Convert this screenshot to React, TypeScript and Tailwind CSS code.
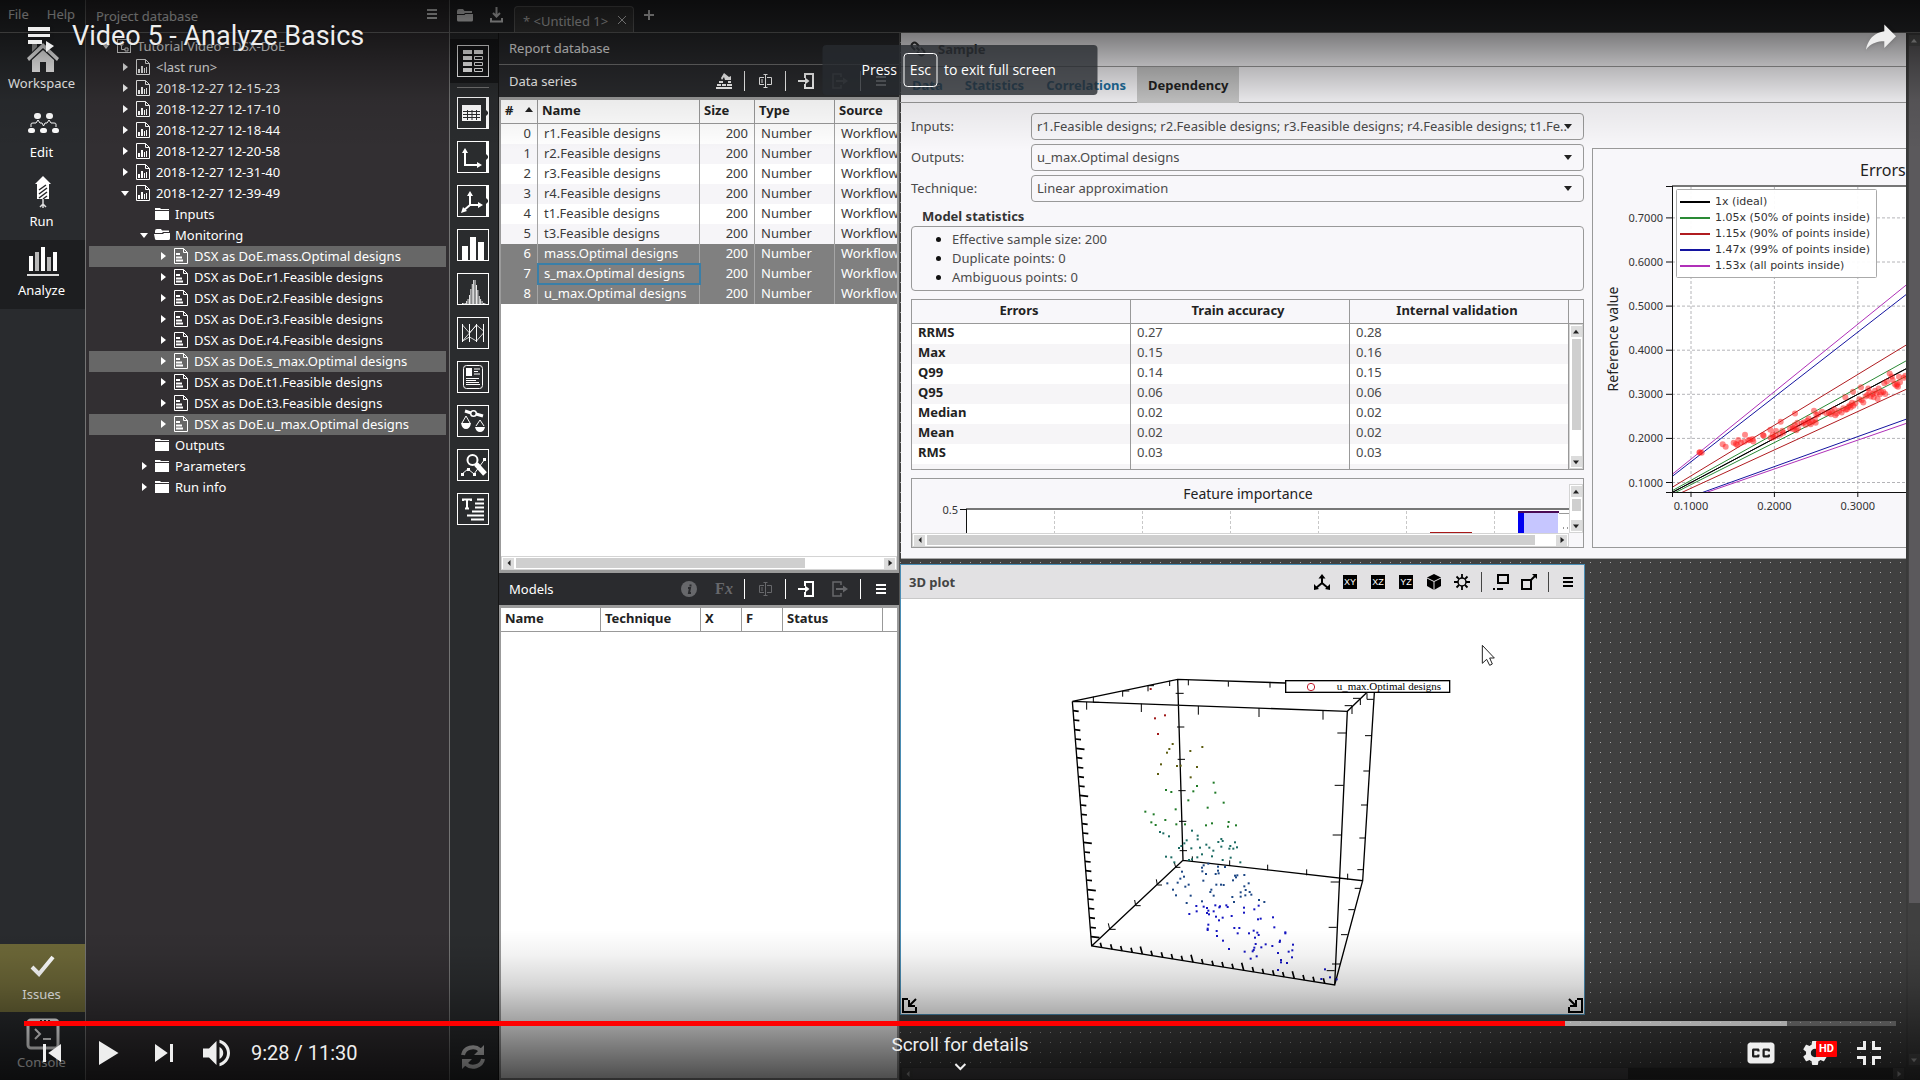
import React from "react";

const FONT = 'font-["Noto_Sans","Open_Sans",sans-serif]';

/* ---------- shared bits ---------- */

type SvgProps = { children?: React.ReactNode; className?: string; size?: number; box?: number };

function Glyph({ children, className = "", size = 16, box = 16 }: SvgProps) {
  return (
    <svg width={size} height={size} viewBox={`0 0 ${box} ${box}`} className={`shrink-0 ${className}`} fill="none" stroke="currentColor" aria-hidden="true">
      {children}
    </svg>
  );
}

function MenuIcon({ className = "" }: { className?: string }) {
  return (
    <Glyph size={16} className={className}>
      <path d="M3 4h10M3 8h10M3 12h10" strokeWidth="2" />
    </Glyph>
  );
}

function Triangle({ dir, className = "" }: { dir: "up" | "down" | "left" | "right"; className?: string }) {
  const d = {
    up: "M0 6l4-5 4 5z",
    down: "M0 2l4 5 4-5z",
    left: "M6 0L2 4l4 4z",
    right: "M2 0l5 4-5 4z",
  }[dir];
  return (
    <svg width="8" height="8" viewBox="0 0 8 8" className={`shrink-0 ${className}`} aria-hidden="true">
      <path d={d} fill="currentColor" />
    </svg>
  );
}

function Arrow({ dir, dark }: { dir: "up" | "down" | "left" | "right"; dark?: boolean }) {
  return (
    <button
      type="button"
      aria-label={`Scroll ${dir}`}
      className={`flex h-[11px] w-[11px] shrink-0 items-center justify-center ${dark ? "bg-[#ffffff14] text-[#b0b0b0]" : "bg-[#dcdcdc] text-[#222]"}`}
    >
      <Triangle dir={dir} className="scale-75" />
    </button>
  );
}

function HScroll({ thumb }: { thumb: string }) {
  return (
    <div className="flex h-[14px] items-center gap-[2px] border border-[#d4d4d4] bg-white px-px">
      <Arrow dir="left" />
      <div className="h-[10px] flex-1">
        <div className="h-full bg-[#cfcfcf]" style={{ width: thumb }} />
      </div>
      <Arrow dir="right" />
    </div>
  );
}

function VScroll({ thumb, className = "" }: { thumb: string; className?: string }) {
  return (
    <div className={`flex w-[14px] flex-col items-center gap-[2px] border border-[#d4d4d4] bg-white py-px ${className}`}>
      <Arrow dir="up" />
      <div className="w-[9px] min-h-0 flex-1">
        <div className="w-full bg-[#cfcfcf]" style={{ height: thumb }} />
      </div>
      <Arrow dir="down" />
    </div>
  );
}

/* ---------- left navigation ---------- */

const HomeIcon = (
  <svg width="34" height="36" viewBox="0 0 34 36" fill="#fff" aria-hidden="true">
    <path d="M6 4h5v6l-5 5z" fill="#b4b4b4" />
    <path d="M17 6L1 21l2 3L17 11l14 13 2-3z" />
    <path d="M17 13L6 23v12h8V25h6v10h8V23z" />
  </svg>
);
const EditIcon = (
  <svg width="34" height="24" viewBox="0 0 34 24" fill="#fff" aria-hidden="true">
    <rect x="8" y="1" width="7" height="6" rx="3" />
    <rect x="20" y="1" width="7" height="6" rx="3" />
    <rect x="2" y="16" width="7" height="5" rx="2.5" />
    <rect x="14" y="16" width="7" height="5" rx="2.5" />
    <rect x="26" y="16" width="7" height="5" rx="2.5" />
    <path d="M5 15v-3q0-1 2-1h3l2-3 2 3h2l1.500 3 1.500-3h2l2-3 2 3h3q2 0 2 1v3" fill="none" stroke="#fff" />
  </svg>
);
const RunIcon = (
  <svg width="18" height="34" viewBox="0 0 18 34" fill="#fff" aria-hidden="true">
    <path d="M9 0l8 8h-2v15H3V8H1z" />
    <path d="M5 14l7-5M5 18l8-6M5 22l8-6M9 23l4-3" stroke="#26272a" strokeWidth="1.500" fill="none" />
    <path d="M9 23v9M6 31l3-3 3 3" stroke="#ddd" strokeWidth="1.500" fill="none" />
  </svg>
);
const AnalyzeIcon = (
  <svg width="34" height="32" viewBox="0 0 34 32" aria-hidden="true">
    <path d="M3 10h4v15H3zM15 1h4v24h-4zM27 6h4v19h-4z" fill="#fff" />
    <path d="M9 6h4v19H9zM21 11h4v14h-4z" fill="#b9b9b9" />
    <path d="M1 28h32v2H1z" fill="#ddd" />
  </svg>
);
const IssuesIcon = (
  <svg width="26" height="24" viewBox="0 0 26 24" aria-hidden="true">
    <path d="M2 13l7 7L23 3" fill="none" stroke="#fff" strokeWidth="4" />
  </svg>
);
const ConsoleIcon = (
  <svg width="34" height="34" viewBox="0 0 34 34" fill="none" stroke="#fff" aria-hidden="true">
    <rect x="2" y="3" width="30" height="28" rx="3" strokeWidth="3" />
    <path d="M3 3h28v5H3z" fill="#fff" />
    <path d="M14 4h2M18 4h2M22 4h2" stroke="#222" strokeWidth="2" />
    <path d="M9 12l5 5-5 5M17 22h8" strokeWidth="2" />
  </svg>
);

function NavItem({ icon, label, tone = "h-[69px]" }: { icon: React.ReactNode; label: string; tone?: string }) {
  return (
    <button type="button" className={`flex w-full shrink-0 flex-col items-center text-white ${tone}`}>
      <span className="flex h-10 items-center pt-1">{icon}</span>
      <span className="pr-[2px] leading-5">{label}</span>
    </button>
  );
}

function NavColumn() {
  return (
    <nav className="flex w-[86px] shrink-0 flex-col border-r border-[#747474] bg-[#292b2e]">
      <div className="flex h-[33px] shrink-0 items-center gap-[18px] border-b border-[#747474] pl-2 pb-1 text-white">
        <button type="button">File</button>
        <button type="button">Help</button>
      </div>
      <NavItem icon={HomeIcon} label="Workspace" />
      <NavItem icon={EditIcon} label="Edit" />
      <NavItem icon={RunIcon} label="Run" />
      <NavItem icon={AnalyzeIcon} label="Analyze" tone="h-[69px] bg-[#1d1e20]" />
      <div className="flex-1" />
      <NavItem icon={IssuesIcon} label="Issues" tone="h-[68px] bg-[#6d6838]" />
      <NavItem icon={ConsoleIcon} label="Console" tone="h-[68px]" />
    </nav>
  );
}

/* ---------- project tree ---------- */

type Node = { label: string; depth: number; icon: "root" | "run" | "folder" | "open" | "doc"; arrow?: "right" | "down"; on?: boolean };

const TREE: Node[] = [
  { label: "Tutorial Video - DSX-DoE", depth: 0, icon: "root", arrow: "down" },
  { label: "<last run>", depth: 1, icon: "run", arrow: "right" },
  { label: "2018-12-27 12-15-23", depth: 1, icon: "run", arrow: "right" },
  { label: "2018-12-27 12-17-10", depth: 1, icon: "run", arrow: "right" },
  { label: "2018-12-27 12-18-44", depth: 1, icon: "run", arrow: "right" },
  { label: "2018-12-27 12-20-58", depth: 1, icon: "run", arrow: "right" },
  { label: "2018-12-27 12-31-40", depth: 1, icon: "run", arrow: "right" },
  { label: "2018-12-27 12-39-49", depth: 1, icon: "run", arrow: "down" },
  { label: "Inputs", depth: 2, icon: "folder" },
  { label: "Monitoring", depth: 2, icon: "open", arrow: "down" },
  { label: "DSX as DoE.mass.Optimal designs", depth: 3, icon: "doc", arrow: "right", on: true },
  { label: "DSX as DoE.r1.Feasible designs", depth: 3, icon: "doc", arrow: "right" },
  { label: "DSX as DoE.r2.Feasible designs", depth: 3, icon: "doc", arrow: "right" },
  { label: "DSX as DoE.r3.Feasible designs", depth: 3, icon: "doc", arrow: "right" },
  { label: "DSX as DoE.r4.Feasible designs", depth: 3, icon: "doc", arrow: "right" },
  { label: "DSX as DoE.s_max.Optimal designs", depth: 3, icon: "doc", arrow: "right", on: true },
  { label: "DSX as DoE.t1.Feasible designs", depth: 3, icon: "doc", arrow: "right" },
  { label: "DSX as DoE.t3.Feasible designs", depth: 3, icon: "doc", arrow: "right" },
  { label: "DSX as DoE.u_max.Optimal designs", depth: 3, icon: "doc", arrow: "right", on: true },
  { label: "Outputs", depth: 2, icon: "folder" },
  { label: "Parameters", depth: 2, icon: "folder", arrow: "right" },
  { label: "Run info", depth: 2, icon: "folder", arrow: "right" },
];

const INDENT = ["pl-2", "pl-[27px]", "pl-[46px]", "pl-[65px]"];

function TreeIcon({ kind }: { kind: Node["icon"] }) {
  switch (kind) {
    case "root":
      return (
        <Glyph>
          <rect x="1.500" y="1.500" width="13" height="13" />
          <path d="M4 4h3v3H4zM5.500 7v4.500H9M9 10h3v3H9z" />
        </Glyph>
      );
    case "run":
      return (
        <Glyph>
          <path d="M1.500 .5h9l4 4v11h-13z" />
          <path d="M10.500 .5v4h4" />
          <path d="M3 10h2v4H3zM6 7h2v7H6zM9 9h1v5H9zM11 8h1v6h-1z" fill="currentColor" stroke="none" />
        </Glyph>
      );
    case "doc":
      return (
        <Glyph>
          <path d="M1.500 .5h9l4 4v11h-13z" />
          <path d="M10.500 .5v4h4" />
          <path d="M3 6h4M3 9.500h6M3 12.500h7" strokeWidth="1.800" />
        </Glyph>
      );
    case "open":
      return (
        <Glyph>
          <path d="M1 6V4q0-2 2-2h4l1 1.500h7V5H9L8 6z M0 7h9l1-1h6v5.500q0 1.500-1.500 1.500h-12Q1 13 1 12z" fill="currentColor" stroke="none" />
        </Glyph>
      );
    default:
      return (
        <Glyph>
          <path d="M1 2h5l1 1h8v1H1zM1 5h14v9H1z" fill="currentColor" stroke="none" />
        </Glyph>
      );
  }
}

function ProjectPanel() {
  return (
    <section className="flex w-[364px] shrink-0 flex-col border-r border-[#747474] bg-[#322f32] text-white">
      <header className="flex h-[33px] shrink-0 items-center justify-between border-b border-[#747474] pr-[9px] pl-[10px]">
        <h2>Project database</h2>
        <button type="button" aria-label="Project menu" className="pb-1">
          <MenuIcon />
        </button>
      </header>
      <ul className="m-[3px]">
        {TREE.map((n) => (
          <li key={n.label} className={`flex h-[21px] items-center pb-px ${INDENT[n.depth]} ${n.on ? "bg-[#676767]" : ""}`}>
            <span className="flex w-[18px] justify-center">{n.arrow && <Triangle dir={n.arrow} />}</span>
            <span className="mr-1 flex w-[18px] justify-center">
              <TreeIcon kind={n.icon} />
            </span>
            <span className="pb-px leading-[18px] whitespace-nowrap">{n.label}</span>
          </li>
        ))}
      </ul>
    </section>
  );
}

/* ---------- plot tool strip ---------- */

const Band = (
  <g stroke="none">
    <path d="M29 0h3v32h-3z" fill="#fff" />
    <path d="M29 13l3 3-3 3z" fill="#2a2c2e" />
  </g>
);

const HIST = [1, 1, 1, 3, 5, 9, 15, 20, 24, 24, 19, 14, 8, 5, 3, 1, 1];

const TOOLS: { name: string; art: React.ReactNode }[] = [
  {
    name: "Table",
    art: (
      <>
        <path d="M5 8h19v16H5z" fill="#fff" stroke="none" />
        <path d="M6 14.500h17M6 17.500h17M6 20.500h17M10.500 13v10M15 13v10M19.500 13v10" stroke="#2a2c2e" />
        {Band}
      </>
    ),
  },
  {
    name: "2D plot",
    art: (
      <>
        <path d="M8 9v15h14" strokeWidth="2" />
        <path d="M5 12l3-5 3 5zM20 21l5 3-5 3z" fill="#fff" stroke="none" />
        {Band}
      </>
    ),
  },
  {
    name: "3D plot",
    art: (
      <>
        <path d="M13 8v12h10M13 20l-7 6" strokeWidth="2" />
        <path d="M10 11l3-5 3 5zM21 17l5 3-5 3zM4 28l2-6 4 4z" fill="#fff" stroke="none" />
        {Band}
      </>
    ),
  },
  { name: "Bar chart", art: <path d="M5 17h6v14H5zM13 8h6v23h-6zM21 13h6v18h-6z" fill="#fff" stroke="none" /> },
  {
    name: "Histogram",
    art: (
      <g fill="#fff" stroke="none">
        {HIST.map((h, i) => (
          <rect key={i} x={5 + i * 1.4} y={31 - h} width="0.9" height={h} />
        ))}
      </g>
    ),
  },
  {
    name: "Parallel coordinates",
    art: (
      <>
        <path d="M5.500 7v18M12.500 7v18M19.500 7v18M26.500 7v18" />
        <path d="M5.500 8l7 8 7-8 7 6M5.500 24l7-8M5.500 24l7-4 7 4 7-8M12.500 16l7-8" strokeWidth="0.800" />
      </>
    ),
  },
  {
    name: "Report",
    art: (
      <>
        <rect x="6.500" y="4.500" width="19" height="23" rx="3" />
        <path d="M9 7h6v8H9z" fill="#fff" stroke="none" />
        <path d="M17 8h6M17 10.500h4M17 13h6M9 17.500h13M9 19.500h10M9 21.500h13M9 23.500h14" />
      </>
    ),
  },
  {
    name: "Compare",
    art: (
      <>
        <path d="M8 6l6 2M19 9l7 2" strokeWidth="3" />
        <circle cx="16.500" cy="8.500" r="2.800" strokeWidth="1.500" />
        <path d="M9 11l-4 7M9 11l4 7M23 15l-4 6M23 15l4 6" />
        <path d="M4 18h10q-1 6-5 6t-5-6zM18 22h10q-1 5-5 5t-5-5z" fill="#fff" stroke="none" />
      </>
    ),
  },
  {
    name: "Explore",
    art: (
      <>
        <circle cx="15.500" cy="11" r="5" strokeWidth="2" />
        <path d="M19 15l9 10" strokeWidth="5" />
        <path d="M5 25l6-5 6 5 11-15" />
        <path d="M4 24h3v3H4zM10 19h3v3h-3zM16 24h3v3h-3zM26 9h3v3h-3z" fill="#fff" stroke="none" />
      </>
    ),
  },
  {
    name: "Text note",
    art: (
      <>
        <path d="M6 8V6.500h8V8M10 6v9.500M8 15.500h4" strokeWidth="2" />
        <path d="M20 6.500h7M18 10.500h9M18 14.500h9M15 18.500h12M10 22.500h17M14 26.500h13" strokeWidth="2" />
      </>
    ),
  },
];

function ToolBox({ name, children }: { name: string; children: React.ReactNode }) {
  return (
    <button type="button" aria-label={name} title={name} className="h-8 w-8 shrink-0">
      <Glyph size={32} box={32} className="text-white">
        {children}
        <rect x="0.500" y="0.500" width="31" height="31" />
      </Glyph>
    </button>
  );
}

function ToolStrip() {
  return (
    <div className="flex w-[49px] shrink-0 flex-col items-stretch border-r border-[#151515] bg-[#2a2c2e] pt-[6px]">
      <div className="flex h-11 items-center bg-[#17181a] pl-[7px]">
        <ToolBox name="Report database">
          <g fill="#fff" stroke="none">
            <path d="M6 5h9v4H6zM6 11h9v4H6zM6 17h9v4H6zM6 23h9v4H6zM17 5h9v4h-9z" />
          </g>
          <path d="M17.500 11.500h8v3h-8zM17.500 17.500h8v3h-8zM17.500 23.500h8v3h-8z" />
        </ToolBox>
      </div>
      <div className="mt-1 mb-[9px] ml-[7px] h-px w-8 bg-[#777]" />
      <div className="flex flex-col gap-3 pl-[7px]">
        {TOOLS.map((t) => (
          <ToolBox key={t.name} name={t.name}>
            {t.art}
          </ToolBox>
        ))}
      </div>
      <button type="button" aria-label="Refresh" className="mt-auto mb-2 ml-2 text-[#dadada]">
        <Glyph size={30} box={30}>
          <path d="M5 13a10 9 0 0 1 17-5M25 17a10 9 0 0 1-17 5" strokeWidth="4" />
          <path d="M26 3v10H16zM4 27V17h10z" fill="currentColor" stroke="none" />
        </Glyph>
      </button>
    </div>
  );
}

/* ---------- report database ---------- */

const RenameIcon = (
  <Glyph>
    <path d="M7 4.500H2.500v7H7M10 4.500h4.500v7H10M8.500 2v12M6.500 1.500h4M6.500 14.500h4M5 6v4" />
  </Glyph>
);
const ImportIcon = (
  <Glyph>
    <path d="M7 5V1h8v14H7v-4" strokeWidth="2" />
    <path d="M0 8h9" strokeWidth="2" />
    <path d="M7 4.500L11.500 8 7 11.500z" fill="currentColor" stroke="none" />
  </Glyph>
);
const ExportIcon = (
  <Glyph>
    <path d="M9 4V1H1v14h8v-3" strokeWidth="1.500" />
    <path d="M4 8h9" strokeWidth="2" />
    <path d="M11 4.500L16 8l-5 3.500z" fill="currentColor" stroke="none" />
  </Glyph>
);
const DozerIcon = (
  <Glyph>
    <path d="M0 14h16v2H0zM1 11h4v2H1zM6 11h4v2H6zM3 8h4v2H3zM12 8h3v2h-3zM11 11h5v2h-5zM5 5l3-5 5 4 2-1v4H9L8 4 6 7z" fill="currentColor" stroke="none" />
  </Glyph>
);

function IconButton({ label, off, children }: { label: string; off?: boolean; children: React.ReactNode }) {
  return (
    <button type="button" aria-label={label} disabled={off} className={`flex w-5 items-center justify-center pb-px ${off ? "text-[#67686b]" : "text-white"}`}>
      {children}
    </button>
  );
}

const Bar = <span className="mx-[10px] h-5 w-px bg-white" />;

function Th({ children, className = "" }: { children?: React.ReactNode; className?: string }) {
  return <th className={`h-6 border-b border-[#999] p-0 pb-[3px] pl-1 text-left leading-5 font-bold ${className}`}>{children}</th>;
}

const SERIES = [
  "r1.Feasible designs",
  "r2.Feasible designs",
  "r3.Feasible designs",
  "r4.Feasible designs",
  "t1.Feasible designs",
  "t3.Feasible designs",
  "mass.Optimal designs",
  "s_max.Optimal designs",
  "u_max.Optimal designs",
];

function ReportPanel() {
  const cell = "h-5 border-r border-[#a5a5a5] p-0 pb-[2px] leading-[18px]";
  return (
    <section className="flex w-[401px] shrink-0 flex-col border-r border-[#555] bg-[#2a2b2e] text-white">
      <h2 className="flex h-8 shrink-0 items-center border-b border-[#747474] pb-[2px] pl-[10px]">Report database</h2>
      <header className="flex h-8 shrink-0 items-center pr-2 pl-[10px]">
        <h3 className="flex-1">Data series</h3>
        <IconButton label="Build model">{DozerIcon}</IconButton>
        {Bar}
        <IconButton label="Rename">{RenameIcon}</IconButton>
        {Bar}
        <IconButton label="Import">{ImportIcon}</IconButton>
        <span className="w-[14px]" />
        <IconButton label="Export" off>
          {ExportIcon}
        </IconButton>
        {Bar}
        <IconButton label="Data series menu">
          <MenuIcon />
        </IconButton>
      </header>
      <div className="flex h-[476px] shrink-0 flex-col border-2 border-t-[3px] border-b-[3px] border-[#9b9b9b] bg-white text-[#3a3a3a]">
        <table className="w-full table-fixed border-separate border-spacing-0">
          <colgroup>
            <col className="w-[37px]" />
            <col className="w-[162px]" />
            <col className="w-[55px]" />
            <col className="w-[80px]" />
            <col />
          </colgroup>
          <thead className="text-[#222]">
            <tr>
              <Th className="border-r">
                <span className="flex items-center justify-between pr-1">
                  #<Triangle dir="up" />
                </span>
              </Th>
              <Th className="border-r">Name</Th>
              <Th className="border-r">Size</Th>
              <Th className="border-r">Type</Th>
              <Th>Source</Th>
            </tr>
          </thead>
          <tbody>
            {SERIES.map((name, i) => (
              <tr key={name} className={i > 5 ? "bg-[#808080] text-white" : i % 2 ? "bg-[#f6f5f8]" : "bg-white"}>
                <td className={`${cell} pr-[6px] text-right`}>{i}</td>
                <td className={`${cell} pl-[6px] ${i === 7 ? "outline-2 -outline-offset-1 outline-[#3a7fa8]" : ""}`}>{name}</td>
                <td className={`${cell} pr-[6px] text-right`}>200</td>
                <td className={`${cell} pl-[6px]`}>Number</td>
                <td className="h-5 overflow-hidden p-0 pb-[2px] pl-[6px] leading-[18px]">Workflow</td>
              </tr>
            ))}
          </tbody>
        </table>
        <div className="mt-auto">
          <HScroll thumb="79%" />
        </div>
      </div>
      <header className="flex h-8 shrink-0 items-center pr-2 pl-[10px]">
        <h3 className="flex-1">Models</h3>
        <IconButton label="Model info" off>
          <Glyph>
            <circle cx="8" cy="8" r="8" fill="currentColor" stroke="none" />
            <path d="M9.500 3.500v2M7 7h2L8 12h2" stroke="#2a2b2e" strokeWidth="2" />
          </Glyph>
        </IconButton>
        <span className="w-[15px]" />
        <IconButton label="Formula" off>
          <span className='font-["Liberation_Serif",serif] text-base font-bold'>
            F<i>x</i>
          </span>
        </IconButton>
        {Bar}
        <IconButton label="Rename model" off>
          {RenameIcon}
        </IconButton>
        {Bar}
        <IconButton label="Import model">{ImportIcon}</IconButton>
        <span className="w-[14px]" />
        <IconButton label="Export model" off>
          {ExportIcon}
        </IconButton>
        {Bar}
        <IconButton label="Models menu">
          <MenuIcon />
        </IconButton>
      </header>
      <div className="min-h-0 flex-1 border-2 border-t-[3px] border-[#9b9b9b] bg-white text-[#222]">
        <table className="w-full table-fixed border-separate border-spacing-0">
          <colgroup>
            <col className="w-[100px]" />
            <col className="w-[100px]" />
            <col className="w-[41px]" />
            <col className="w-[41px]" />
            <col className="w-[100px]" />
            <col />
          </colgroup>
          <thead>
            <tr>
              <Th className="border-r">Name</Th>
              <Th className="border-r">Technique</Th>
              <Th className="border-r">X</Th>
              <Th className="border-r">F</Th>
              <Th className="border-r">Status</Th>
              <Th />
            </tr>
          </thead>
        </table>
      </div>
    </section>
  );
}

/* ---------- sample window ---------- */

function Picker({ id, label, value }: { id: string; label: string; value: string }) {
  return (
    <>
      <label htmlFor={id} className="self-center pb-[2px]">
        {label}
      </label>
      <div className="relative">
        <select id={id} className="h-[27px] w-full appearance-none rounded border border-[#999] bg-transparent pr-4 pb-[2px] pl-[5px]">
          <option>{value}</option>
        </select>
        <Triangle dir="down" className="pointer-events-none absolute top-[9px] right-3 text-[#222]" />
      </div>
    </>
  );
}

const ERRORS = [
  ["RRMS", "0.27", "0.28"],
  ["Max", "0.15", "0.16"],
  ["Q99", "0.14", "0.15"],
  ["Q95", "0.06", "0.06"],
  ["Median", "0.02", "0.02"],
  ["Mean", "0.02", "0.02"],
  ["RMS", "0.03", "0.03"],
];

function ErrorsTable() {
  const cell = "h-5 border-r border-[#999] p-0 pb-1 pl-[6px] leading-4";
  return (
    <div className="flex h-[171px] border border-[#999] bg-white">
      <div className="min-w-0 flex-1 overflow-hidden">
        <table className="w-full table-fixed border-separate border-spacing-0">
          <thead className="text-[#222]">
            <tr className="bg-[#f8f7fa]">
              {["Errors", "Train accuracy", "Internal validation"].map((h) => (
                <th key={h} className="h-6 border-r border-b border-[#999] p-0 pr-1 pb-[3px] leading-5 font-bold">
                  {h}
                </th>
              ))}
            </tr>
          </thead>
          <tbody>
            {ERRORS.map(([name, train, val], i) => (
              <tr key={name} className={i % 2 ? "bg-[#f6f5f7]" : "bg-white"}>
                <th className={`${cell} text-left font-bold text-[#222]`}>{name}</th>
                <td className={cell}>{train}</td>
                <td className={cell}>{val}</td>
              </tr>
            ))}
            <tr className="bg-[#f6f5f7]" aria-hidden="true">
              <td className="h-2 border-r border-[#999] p-0" />
              <td className="h-2 border-r border-[#999] p-0" />
              <td className="h-2 border-r border-[#999] p-0" />
            </tr>
          </tbody>
        </table>
      </div>
      <div className="flex flex-col">
        <div className="h-6 border-b border-[#999] bg-[#f8f7fa]" />
        <VScroll thumb="79%" className="flex-1" />
      </div>
    </div>
  );
}

function FeatureChart() {
  return (
    <div className="grid h-[70px] grid-cols-[1fr_14px] grid-rows-[54px_14px] border border-[#999]">
      <svg width="657" height="54" viewBox="1 0 657 54" role="img" aria-label="Feature importance bar chart">
        <path d="M55 30h603v24H55z" fill="#fff" />
        <text x="337" y="20" textAnchor="middle" fontSize="14" fill="#222">
          Feature importance
        </text>
        <text x="47" y="35" textAnchor="end" fontSize="11" fill="#333">
          0.5
        </text>
        {[143, 231, 319, 407, 495, 583].map((x) => (
          <path key={x} d={`M${x + 0.5} 32V54`} stroke="#c8c8c8" strokeDasharray="3 2" />
        ))}
        <path d="M55 30h603" stroke="#777" strokeWidth="2" />
        <path d="M49 30.500h6M55.500 30v24" stroke="#111" fill="none" />
        <path d="M613 33h34v21h-34z" fill="#c6c6ff" />
        <path d="M607 33h6v21h-6z" fill="#0000f0" />
        <path d="M607 33h41" stroke="#4a0a55" strokeWidth="2" />
        <path d="M648 34.500h10" stroke="#999" />
        <path d="M519 53.500h42" stroke="#a81818" strokeWidth="1" />
        <path d="M652 49h1M656 49h1" stroke="#333" />
      </svg>
      <VScroll thumb="65%" className="mt-[5px]" />
      <HScroll thumb="97%" />
      <span />
    </div>
  );
}

const SCATTER: [number, number][] = [
  [900, 1266], [905, 1268], [898, 1267], [968, 1244], [977, 1251], [1001, 1240], [1008, 1243], [1015, 1232], [1012, 1246], [1023, 1240],
  [1035, 1217], [1033, 1237], [1045, 1233], [1058, 1229], [1060, 1236], [1050, 1231], [1089, 1218], [1091, 1220], [1111, 1203], [1112, 1226],
  [1118, 1217], [1128, 1207], [1127, 1220], [1120, 1225], [1142, 1181], [1140, 1217], [1150, 1212], [1147, 1206], [1170, 1200], [1178, 1196],
  [1185, 1158], [1184, 1190], [1189, 1205], [1192, 1184], [1194, 1199], [1181, 1202], [1206, 1186], [1212, 1182], [1217, 1189], [1222, 1178],
  [1226, 1172], [1229, 1184], [1232, 1188], [1238, 1180], [1242, 1150], [1245, 1175], [1247, 1184], [1249, 1162], [1254, 1160], [1266, 1153],
  [1279, 1157], [1287, 1156], [1293, 1160], [1296, 1153], [1303, 1146], [1306, 1163], [1310, 1158], [1318, 1150], [1325, 1155], [1330, 1143],
  [1336, 1112], [1337, 1147], [1341, 1146], [1345, 1139], [1350, 1135], [1352, 1141], [1356, 1128], [1359, 1097], [1360, 1136], [1366, 1130],
  [1383, 1084], [1378, 1118], [1385, 1121], [1390, 1127], [1397, 1110], [1402, 1106], [1405, 1088], [1408, 1098], [1412, 1110], [1418, 1103],
  [1421, 1112], [1425, 1094], [1429, 1102], [1433, 1117], [1436, 1088], [1440, 1104], [1444, 1098], [1450, 1097], [1456, 1103], [1453, 1073],
  [1461, 1068], [1469, 1046], [1475, 1054], [1478, 1064], [1484, 1075], [1489, 1080], [1492, 1076], [1494, 1083], [1500, 1070], [1497, 1055],
  [1511, 1058], [1516, 1052],
];

const LEGEND = [
  { label: "1x (ideal)", color: "#000000", k: 1 },
  { label: "1.05x (50% of points inside)", color: "#2a8a35", k: 1.05 },
  { label: "1.15x (90% of points inside)", color: "#b01c20", k: 1.15 },
  { label: "1.47x (99% of points inside)", color: "#1414a0", k: 1.47 },
  { label: "1.53x (all points inside)", color: "#b030b8", k: 1.53 },
];

/* plot area scales, in drawing pixels */
const px = (u: number) => 99 + (u - 0.1) * 834;
const py = (v: number) => 334.5 - (v - 0.1) * 441;

function ErrorsPlot() {
  const [u0, u1] = [0.05, 0.48];
  return (
    <svg width="400" height="398" viewBox="1 1 400 398" role="img" aria-label="Errors scatter plot" fontSize="12">
      <defs>
        <clipPath id="plot-area">
          <rect x="80" y="38" width="321" height="306" />
        </clipPath>
      </defs>
      <path d="M80 38h321v306H80z" fill="#fff" />
      <text x="268" y="28" fontSize="16" fill="#222">
        Errors plot
      </text>
      <text transform="rotate(-90 26 191)" x="26" y="191" textAnchor="middle" fontSize="14" fill="#222">
        Reference value
      </text>
      {[0.1, 0.2, 0.3, 0.4, 0.5, 0.6, 0.7].map((v) => (
        <g key={v}>
          <path d={`M80 ${py(v)}H401`} stroke="#b4b4b8" strokeDasharray="3 2" />
          <path d={`M74 ${py(v)}h6`} stroke="#111" />
          <text x="71" y={py(v) + 4} textAnchor="end" fontSize="11" fill="#333">
            {v.toFixed(4)}
          </text>
        </g>
      ))}
      {[0.1, 0.2, 0.3].map((v) => (
        <g key={v}>
          <path d={`M${px(v)} 38V344`} stroke="#b4b4b8" strokeDasharray="3 2" />
          <path d={`M${px(v)} 344v5`} stroke="#111" />
          <text x={px(v)} y="362" textAnchor="middle" fontSize="11" fill="#333">
            {v.toFixed(4)}
          </text>
        </g>
      ))}
      <g clipPath="url(#plot-area)" strokeWidth="1">
        {LEGEND.map((l) => (
          <path key={l.k} d={`M${px(u0)} ${py(u0 * l.k)}L${px(u1)} ${py(u1 * l.k)}M${px(u0)} ${py(u0 / l.k)}L${px(u1)} ${py(u1 / l.k)}`} stroke={l.color} fill="none" />
        ))}
        {SCATTER.map(([x, y], i) => (
          <circle key={i} cx={x / 3 - 192} cy={y / 2.8 - 148} r="3" fill="#ff1818" fillOpacity="0.5" />
        ))}
      </g>
      <path d="M80 38h321" stroke="#777" strokeWidth="2" />
      <path d="M74 38.500h6M74 344.500h327M80.500 38v311" stroke="#111" fill="none" />
      <rect x="84.500" y="41.500" width="200" height="88" rx="1" fill="#fffffff0" stroke="#aaa" />
      {LEGEND.map((l, i) => (
        <g key={l.k}>
          <path d={`M88 ${54 + i * 16}h30`} stroke={l.color} strokeWidth="2" />
          <text x="123" y={57 + i * 16} fill="#333" fontSize="11" fontFamily="'DejaVu Sans', sans-serif">
            {l.label}
          </text>
        </g>
      ))}
    </svg>
  );
}

function SampleWindow() {
  const tab = "flex h-9 items-center px-[11px] font-bold";
  return (
    <article className="absolute top-0 left-px flex h-[526px] w-[1300px] flex-col border-b border-[#aaa] bg-[#f8f7fa] text-[#4a4a4a]">
      <header className="flex h-[34px] items-center gap-3 border-b border-[#999] pb-px pl-[9px] text-[#333]">
        <Glyph className="rotate-90">
          <path d="M6.500 9.500l3-3M7 5l2.500-2.500a2.800 2.800 0 0 1 4 4L11 9M9 11l-2.500 2.500a2.800 2.800 0 0 1-4-4L5 7" strokeWidth="2" />
        </Glyph>
        <h2 className="font-bold">Sample</h2>
      </header>
      <div role="tablist" className="flex h-9 border-b border-[#999] text-[#1e6f9f]">
        <button type="button" role="tab" className={tab}>
          Data
        </button>
        <button type="button" role="tab" className={tab}>
          Statistics
        </button>
        <button type="button" role="tab" className={tab}>
          Correlations
        </button>
        <button type="button" role="tab" aria-selected="true" className={`${tab} bg-[#c9c9c9] text-[#222]`}>
          Dependency
        </button>
      </div>
      <div className="flex flex-1 gap-2 p-[10px]">
        <div className="w-[673px] shrink-0">
          <div className="grid grid-cols-[120px_1fr] gap-y-1">
            <Picker id="inputs" label="Inputs:" value="r1.Feasible designs; r2.Feasible designs; r3.Feasible designs; r4.Feasible designs; t1.Fe..." />
            <Picker id="outputs" label="Outputs:" value="u_max.Optimal designs" />
            <Picker id="technique" label="Technique:" value="Linear approximation" />
          </div>
          <h3 className="flex h-6 items-center pt-1 pl-[11px] font-bold text-[#333]">Model statistics</h3>
          <ul className="mb-2 list-disc rounded-sm border border-[#999] py-[3px] pl-10 leading-[19px] marker:text-[#111]">
            <li>Effective sample size: 200</li>
            <li>Duplicate points: 0</li>
            <li>Ambiguous points: 0</li>
          </ul>
          <div className="mb-2">
            <ErrorsTable />
          </div>
          <FeatureChart />
        </div>
        <div className="mt-[35px] overflow-hidden border border-[#999]">
          <ErrorsPlot />
        </div>
      </div>
    </article>
  );
}

/* ---------- 3D plot window ---------- */

const CLOUD: [number, number][] = [
  [332, 117], [345, 205], [375, 196], [354, 252], [398, 282], [388, 297], [381, 308], [451, 303], [487, 291], [363, 343],
  [411, 348], [422, 347], [471, 351], [354, 372], [452, 382], [521, 398], [471, 408], [378, 420], [394, 426], [460, 424],
  [526, 428], [445, 451], [551, 458], [503, 473], [407, 478], [316, 485], [341, 493], [376, 510], [334, 517], [347, 525],
  [409, 523], [435, 523], [498, 526], [516, 520], [566, 516], [564, 530], [588, 526], [456, 542], [360, 546], [370, 550],
  [387, 559], [473, 557], [473, 568], [440, 571], [544, 567], [548, 573], [535, 576], [585, 577], [433, 580], [424, 588],
  [417, 594], [454, 595], [480, 593], [499, 584], [508, 593], [520, 602], [544, 590], [571, 588], [568, 596], [580, 596],
  [591, 592], [486, 613], [378, 620], [394, 622], [472, 622], [516, 619], [548, 630], [572, 623], [601, 637], [403, 637],
  [447, 630], [456, 628], [491, 646], [486, 653], [505, 641], [534, 650], [555, 651], [487, 664], [498, 672], [426, 665],
  [534, 662], [527, 672], [536, 670], [432, 680], [421, 686], [490, 692], [413, 698], [382, 700], [585, 677], [592, 676],
  [588, 682], [579, 691], [613, 675], [436, 710], [446, 704], [529, 704], [543, 704], [551, 705], [399, 719], [514, 719],
  [511, 726], [613, 709], [626, 700], [617, 720], [602, 727], [408, 736], [452, 737], [521, 737], [577, 741], [602, 740],
  [616, 736], [634, 734], [629, 726], [440, 759], [486, 754], [582, 756], [657, 750], [673, 756], [469, 768], [491, 770],
  [501, 774], [526, 766], [540, 769], [538, 772], [559, 766], [563, 771], [656, 767], [612, 773], [643, 778], [470, 784],
  [448, 792], [521, 784], [505, 782], [501, 789], [507, 793], [612, 788], [528, 800], [548, 803], [575, 798], [537, 811],
  [654, 808], [662, 806], [699, 802], [505, 824], [503, 840], [530, 843], [583, 834], [598, 834], [703, 832], [641, 842],
  [652, 848], [627, 850], [593, 850], [656, 855], [736, 850], [531, 858], [645, 863], [549, 872], [720, 872], [647, 882],
  [677, 883], [697, 888], [759, 884], [643, 893], [664, 892], [567, 897], [641, 900], [757, 901], [746, 905], [614, 905],
  [638, 904], [714, 909], [650, 919], [756, 922], [632, 926], [723, 930], [723, 937], [741, 939], [714, 960], [855, 958],
  [870, 982], [844, 987], [890, 988], [503, 836], [719, 876], [736, 847],
];

function cloudColor(y: number) {
  if (y < 270) return "#a01818";
  if (y < 390) return "#5c5c10";
  if (y < 535) return "#1e7a26";
  if (y < 640) return "#1a6a62";
  if (y < 760) return "#1c4684";
  return "#1414c0";
}

/* evenly spaced ticks along a cube edge */
function ticks(a: [number, number], b: [number, number], n: number, d: [number, number], major = 0) {
  let out = "";
  for (let i = 1; i < n; i++) {
    const t = i / n;
    const x = a[0] + (b[0] - a[0]) * t;
    const y = a[1] + (b[1] - a[1]) * t;
    const s = major && i % major === 0 ? 1.5 : 1;
    out += `M${x.toFixed(0)} ${y.toFixed(0)}l${d[0] * s} ${d[1] * s}`;
  }
  return out;
}

function Cube() {
  return (
    <svg className="h-full w-full" viewBox="-417 -153 2046 1245" preserveAspectRatio="xMinYMin meet" role="img" aria-label="3D scatter plot of u_max.Optimal designs">
      <g stroke="#000" fill="none" strokeWidth="4">
        <path d="M97 154L413 88L1003 108M97 154L922 184L1003 106M97 154L155 888L884 1005L922 184M413 88L429 631L155 888M429 631L968 692L1003 128M968 692L884 1005" />
        <path d={ticks([97, 154], [155, 888], 26, [17, 2], 5)} strokeWidth="5" />
        <path d={ticks([155, 888], [884, 1005], 24, [-4, -15], 5)} strokeWidth="5" />
        <g strokeWidth="3">
          <path d="M140 156v23M304 161v25M475 168v26M657 174v27M849 181v28" />
          <path d="M160 140v17h18M248 140v-17h20M324 124v-17h18M389 108V92" />
          <path d="M445 90v16M565 94v16M690 97v16" />
          <path d="M407 130h24M411 231h22M413 328h22M415 422h22M417 514h22M419 602h22" />
          <path d="M457 635v-16M569 648v-17M683 661v-17M800 676v-18M923 689v-18" />
          <path d="M892 249h27M884 406h27M878 555h27M872 696h27M866 832h24M860 962h24M876 942h24" />
          <path d="M975 257h20M970 363h20M963 465h20M958 564h18M952 659h18M944 715h18M925 779h18M903 854h20" />
          <path d="M936 192v-25h-22M961 165v-20h-22M981 130v18h20" />
          <path d="M205 820l4 18h18M284 750l3 17h15M349 688l3 17h14M403 637l4 15h14" />
        </g>
      </g>
      {CLOUD.map(([x, y], i) => (
        <rect key={i} x={x - 3} y={y - 3} width="6" height="6" fill={cloudColor(y)} />
      ))}
      <rect x="737" y="92" width="492" height="35" fill="#fff" stroke="#000" strokeWidth="4" />
      <circle cx="813" cy="111" r="11" fill="none" stroke="#c01c2c" strokeWidth="3" />
      <text x="890" y="120" fontSize="33" fill="#000" fontFamily="'Liberation Serif', serif">
        u_max.Optimal designs
      </text>
      <path d="M893 255v54l13-12 9 18 8-4-8-18h14z" transform="translate(434 -269)" fill="#fff" stroke="#222" strokeWidth="3" />
    </svg>
  );
}

function Plane({ label }: { label: string }) {
  return (
    <svg width="14" height="14" viewBox="0 0 14 14" aria-hidden="true">
      <path d="M0 0h14v14H0z" />
      <text x="7" y="10" textAnchor="middle" fontSize="9" fontFamily="'Liberation Sans', sans-serif" fill="#fff">
        {label}
      </text>
    </svg>
  );
}

const Corner = (
  <Glyph size={18} box={18}>
    <path d="M7 3H2v13h13v-5" strokeWidth="2" />
    <path d="M15 3L9 9M8 4v6h6" strokeWidth="2" />
  </Glyph>
);

function PlotWindow() {
  const btn = "flex w-7 items-center justify-center";
  return (
    <article className="absolute top-[531px] left-0 flex h-[451px] w-[685px] flex-col border border-[#4a8db4] bg-white text-black">
      <header className="flex h-[34px] shrink-0 items-center border-b border-[#c8c8c8] bg-[#e2e1e3] pr-[2px] pl-2">
        <h2 className="flex-1 font-bold text-[#444]">3D plot</h2>
        <button type="button" aria-label="Reset axes" className={btn}>
          <Glyph>
            <path d="M8 3v6l-6 5M8 9l6 5M8 3" strokeWidth="2" />
            <path d="M4.500 4.500L8 0l3.500 4.500zM0 16v-6l5 5zM16 16v-6l-5 5z" fill="currentColor" stroke="none" />
          </Glyph>
        </button>
        <button type="button" aria-label="XY plane" className={btn}>
          <Plane label="XY" />
        </button>
        <button type="button" aria-label="XZ plane" className={btn}>
          <Plane label="XZ" />
        </button>
        <button type="button" aria-label="YZ plane" className={btn}>
          <Plane label="YZ" />
        </button>
        <button type="button" aria-label="Perspective" className={btn}>
          <Glyph>
            <path d="M8 0l7 3.500v8.500L8 16l-7-4V3.500z" fill="currentColor" stroke="none" />
            <path d="M1 4l7 3.500L15 4M8 7.500V16" stroke="#e2e1e3" />
          </Glyph>
        </button>
        <button type="button" aria-label="Settings" className={btn}>
          <Glyph>
            <circle cx="8" cy="8" r="4" strokeWidth="1.500" />
            <path d="M8 0v4M8 12v4M0 8h4M12 8h4M2.500 2.500l2.500 2.500M11 11l2.500 2.500M13.500 2.500L11 5M5 11l-2.500 2.500" strokeWidth="1.800" />
          </Glyph>
        </button>
        <span className="mx-[5px] h-5 w-px bg-[#444]" />
        <button type="button" aria-label="Minimize" className={btn}>
          <Glyph>
            <rect x="5" y="1" width="10" height="8" strokeWidth="2" />
            <path d="M0 15h2M4 15h6" strokeWidth="2" />
          </Glyph>
        </button>
        <button type="button" aria-label="Detach" className={btn}>
          <Glyph>
            <rect x="1" y="6" width="9" height="9" strokeWidth="2" />
            <path d="M10 6l5-5" strokeWidth="2" />
            <path d="M11 0h5v5z" fill="currentColor" stroke="none" />
          </Glyph>
        </button>
        <span className="mx-[5px] h-5 w-px bg-[#444]" />
        <button type="button" aria-label="Plot menu" className={btn}>
          <MenuIcon />
        </button>
      </header>
      <div className="relative min-h-0 flex-1">
        <Cube />
        <span className="absolute bottom-0 left-0">{Corner}</span>
        <span className="absolute right-0 bottom-0 -scale-x-100">{Corner}</span>
      </div>
    </article>
  );
}

/* ---------- workspace with tabs and canvas ---------- */

function Workspace() {
  return (
    <div className="flex min-w-0 flex-1 flex-col bg-[#292a2d]">
      <header className="flex h-[33px] shrink-0 items-end border-b border-[#6a6a6a] pl-[5px] text-white">
        <button type="button" aria-label="Open report" className="mr-[11px] mb-[9px] flex w-5 justify-center">
          <Glyph>
            <path d="M0 4q0-2 2-2h4l1.500 2H15v2H8L7 7H0zM0 8h7.500l1-1H16v6q0 1.500-1.500 1.500h-13Q0 14.500 0 13z" fill="currentColor" stroke="none" />
          </Glyph>
        </button>
        <button type="button" aria-label="Save report" className="mb-[9px] flex w-5 justify-center">
          <Glyph>
            <path d="M3 11v3.500h11V11M8.500 0v9M5 6l3.500 3.500L12 6" strokeWidth="2" />
          </Glyph>
        </button>
        <div className="ml-2 flex h-[26px] w-[120px] items-center rounded-t border border-b-0 border-[#6a6a6a] bg-[#3c3c3c] pr-[5px] pl-2">
          <span className="flex-1 pt-[2px] text-[#ddd]">* &lt;Untitled 1&gt;</span>
          <button type="button" aria-label="Close tab">
            <Glyph size={12} box={12}>
              <path d="M2 2l8 8M10 2l-8 8" />
            </Glyph>
          </button>
        </div>
        <button type="button" aria-label="New tab" className="mb-[10px] ml-2">
          <Glyph size={14} box={14}>
            <path d="M7 2v10M2 7h10" strokeWidth="2" />
          </Glyph>
        </button>
      </header>
      <div className="flex min-h-0 flex-1">
        <ToolStrip />
        <ReportPanel />
        <main className="grid min-w-0 flex-1 grid-cols-[1fr_14px] grid-rows-[1fr_13px] bg-[#3c3c3c]">
          <div className="relative overflow-hidden bg-[#404040] bg-[radial-gradient(circle_at_0.5px_0.5px,#a4a4a4_0.7px,transparent_0.7px)] bg-[size:10px_10px] bg-[position:0px_9px]">
            <SampleWindow />
            <PlotWindow />
          </div>
          <div className="flex flex-col items-center border-l-2 border-[#3a3a3a] bg-[#404040] py-[2px]">
            <Arrow dir="up" dark />
            <div className="min-h-0 flex-1">
              <div className="h-[85%] w-[11px] bg-[#5b595c]" />
            </div>
            <Arrow dir="down" dark />
          </div>
          <div className="flex items-center bg-[#3a3a3a] px-[2px]">
            <Arrow dir="left" dark />
            <div className="h-[11px] flex-1 bg-[#2c2c2c]">
              <div className="h-full w-[73%] bg-[#4c4a4d]" />
            </div>
            <Arrow dir="right" dark />
          </div>
          <span />
        </main>
      </div>
    </div>
  );
}

/* ---------- video player chrome ---------- */

function PlayerIcon({ d, label, className = "w-14", children }: { d: string; label: string; className?: string; children?: React.ReactNode }) {
  return (
    <button type="button" aria-label={label} className={`relative flex justify-center ${className}`}>
      <svg width="54" height="54" viewBox="0 0 36 36" className="shrink-0" fill="#eee" fillRule="evenodd" aria-hidden="true">
        <path d={d} />
      </svg>
      {children}
    </button>
  );
}

const GEAR =
  "m 23.94,18.78 c .03,-0.25 .05,-0.51 .05,-0.78 0,-0.27 -0.02,-0.52 -0.05,-0.78 l 1.68,-1.32 c .15,-0.12 .19,-0.33 .09,-0.51 l -1.6,-2.76 c -0.09,-0.17 -0.31,-0.24 -0.48,-0.17 l -1.99,.8 c -0.41,-0.32 -0.86,-0.58 -1.35,-0.78 l -0.30,-2.12 c -0.02,-0.19 -0.19,-0.33 -0.39,-0.33 l -3.2,0 c -0.2,0 -0.36,.14 -0.39,.33 l -0.30,2.12 c -0.48,.2 -0.93,.47 -1.35,.78 l -1.99,-0.8 c -0.18,-0.07 -0.39,0 -0.48,.17 l -1.6,2.76 c -0.10,.17 -0.05,.39 .09,.51 l 1.68,1.32 c -0.03,.25 -0.05,.52 -0.05,.78 0,.26 .02,.52 .05,.78 l -1.68,1.32 c -0.15,.12 -0.19,.33 -0.09,.51 l 1.6,2.76 c .09,.17 .31,.24 .48,.17 l 1.99,-0.8 c .41,.32 .86,.58 1.35,.78 l .30,2.12 c .02,.19 .19,.33 .39,.33 l 3.2,0 c .2,0 .36,-0.14 .39,-0.33 l .30,-2.12 c .48,-0.2 .93,-0.47 1.35,-0.78 l 1.99,.8 c .18,.07 .39,0 .48,-0.17 l 1.6,-2.76 c .09,-0.17 .05,-0.39 -0.09,-0.51 l -1.68,-1.32 0,0 z m -5.94,2.01 c -1.54,0 -2.8,-1.25 -2.8,-2.8 0,-1.54 1.25,-2.8 2.8,-2.8 1.54,0 2.8,1.25 2.8,2.8 0,1.54 -1.25,2.8 -2.8,2.8 l 0,0 z";
const CC =
  "M11,11 C9.9,11 9,11.9 9,13 L9,23 C9,24.1 9.9,25 11,25 L25,25 C26.1,25 27,24.1 27,23 L27,13 C27,11.9 26.1,11 25,11 L11,11 Z M17,17 L15.5,17 L15.5,16.5 L13.5,16.5 L13.5,19.5 L15.5,19.5 L15.5,19 L17,19 L17,20 C17,20.55 16.55,21 16,21 L13,21 C12.45,21 12,20.55 12,20 L12,16 C12,15.45 12.45,15 13,15 L16,15 C16.55,15 17,15.45 17,16 L17,17 Z M24,17 L22.5,17 L22.5,16.5 L20.5,16.5 L20.5,19.5 L22.5,19.5 L22.5,19 L24,19 L24,20 C24,20.55 23.55,21 23,21 L20,21 C19.45,21 19,20.55 19,20 L19,16 C19,15.45 19.45,15 20,15 L23,15 C23.55,15 24,15.45 24,16 L24,17 Z";

function PlayerChrome() {
  return (
    <div className="absolute inset-0 flex flex-col justify-between font-[Roboto,sans-serif] text-[#eee]">
      <div className="h-[150px] bg-[linear-gradient(to_bottom,rgba(0,0,0,0.7)_0px,rgba(0,0,0,0.5)_33px,rgba(0,0,0,0.27)_66px,rgba(0,0,0,0.08)_100px,rgba(0,0,0,0)_150px)]">
        <div className="flex items-start justify-between pr-3 pl-7">
          <div className="flex items-center gap-4 pt-[15px]">
            <button type="button" aria-label="Playlist" className="drop-shadow">
              <svg width="28" height="32" viewBox="0 0 28 32" aria-hidden="true">
                <path d="M0 7h22v4H0zM0 14h22v3H0zM0 20h14v4H0zM18 21l8 5-8 6z" fill="#eee" />
              </svg>
            </button>
            <h1 className="text-[27px] leading-[42px] [text-shadow:0_0_2px_rgba(0,0,0,0.5)]">Video 5 - Analyze Basics</h1>
          </div>
          <div className="pt-[10px] drop-shadow">
            <PlayerIcon
              label="Share"
              className="w-[54px]"
              d="m 20.20,14.19 0,-4.45 7.79,7.79 -7.79,7.79 0,-4.56 C 16.27,20.69 12.10,21.81 9.34,24.76 8.80,25.13 7.60,27.29 8.12,25.65 9.08,21.32 11.80,17.18 15.98,15.38 c 1.33,-0.60 2.76,-0.98 4.21,-1.19 z"
            />
          </div>
        </div>
      </div>
      <p className='absolute top-[45px] left-1/2 flex h-[50px] w-[275px] -translate-x-1/2 items-center gap-[7px] rounded bg-[#272a30cc] pl-[39px] font-["Open_Sans",sans-serif] text-[14px] text-white'>
        Press
        <kbd className='flex h-[34px] items-center rounded border border-white px-[5px] font-["Open_Sans",sans-serif]'>Esc</kbd>
        to exit full screen
      </p>
      <footer className="flex h-[150px] flex-col justify-end bg-[linear-gradient(to_top,rgba(0,0,0,0.7)_0px,rgba(0,0,0,0.48)_40px,rgba(0,0,0,0.36)_60px,rgba(0,0,0,0.16)_95px,rgba(0,0,0,0.05)_125px,rgba(0,0,0,0)_150px)] px-6">
        <div role="progressbar" aria-label="Playback" aria-valuenow={568} aria-valuemax={690} className="flex h-[5px] shrink-0 bg-[#ffffff33]">
          <div className="w-[82.3%] bg-[#f00]" />
          <div className="w-[11.9%] bg-[#ffffff80]" />
        </div>
        <div className="relative flex h-[54px] items-center justify-between">
          <div className="flex items-center">
            <PlayerIcon label="Previous" d="M12,12 h2 v12 h-2 z M15.5,18 l8.5,6 V12 z" />
            <PlayerIcon label="Play" d="M12,26 L25,18 L12,10 z" />
            <PlayerIcon label="Next" d="M12,24 L20.5,18 L12,12 z M22,12 v12 h2 V12 z" />
            <PlayerIcon
              label="Mute"
              className="w-[51px]"
              d="M8,21 L12,21 L17,26 L17,10 L12,15 L8,15 Z M19,14 L19,22 C20.48,21.32 21.5,19.77 21.5,18 C21.5,16.26 20.48,14.74 19,14 Z M19,11.29 C21.89,12.15 24,14.83 24,18 C24,21.17 21.89,23.85 19,24.71 L19,26.77 C23.01,25.86 26,22.28 26,18 C26,13.72 23.01,10.14 19,9.23 Z"
            />
            <span className="ml-2 text-[20px]">9:28 / 11:30</span>
          </div>
          <button type="button" className="absolute top-[5px] left-1/2 flex -translate-x-1/2 flex-col items-center gap-1 text-[19px] leading-7 whitespace-nowrap">
            Scroll for details
            <svg width="12" height="8" viewBox="0 0 12 8" aria-hidden="true">
              <path d="M1 1l5 5 5-5" fill="none" stroke="#eee" strokeWidth="2" />
            </svg>
          </button>
          <div className="flex">
            <PlayerIcon label="Subtitles" className="w-[54px]" d={CC} />
            <PlayerIcon label="Settings" className="w-[54px]" d={GEAR}>
              <span className="absolute top-[15px] left-7 flex h-4 w-[21px] items-center justify-center rounded-[1px] bg-[#f00] text-[11px] font-bold text-white">HD</span>
            </PlayerIcon>
            <PlayerIcon
              label="Exit full screen"
              className="w-[54px]"
              d="m 14,14 -4,0 0,2 6,0 0,-6 -2,0 0,4 z m 8,0 0,-4 -2,0 0,6 6,0 0,-2 -4,0 z m -2,12 2,0 0,-4 4,0 0,-2 -6,0 0,6 z m -10,-4 4,0 0,4 2,0 0,-6 -6,0 0,2 z"
            />
          </div>
        </div>
      </footer>
    </div>
  );
}

export default function App() {
  return (
    <div className={`relative flex h-screen w-full overflow-hidden bg-black text-[13px] leading-5 ${FONT}`}>
      <NavColumn />
      <ProjectPanel />
      <Workspace />
      <PlayerChrome />
    </div>
  );
}
